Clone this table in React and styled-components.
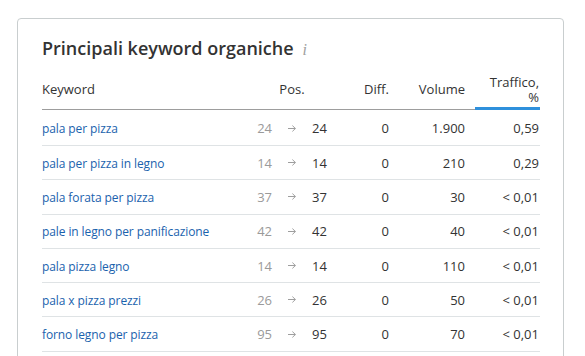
import React from 'react';
import styled, { createGlobalStyle } from 'styled-components';

const GlobalStyle = createGlobalStyle`
  html, body {
    margin: 0;
    padding: 0;
    overflow: hidden;
    background: #ffffff;
  }
  body {
    font-family: "Open Sans", "Noto Sans", sans-serif;
    color: #333;
  }
`;

const rows = [
  { keyword: 'pala per pizza', prev: 24, pos: 24, diff: 0, volume: '1.900', traffic: '0,59' },
  { keyword: 'pala per pizza in legno', prev: 14, pos: 14, diff: 0, volume: '210', traffic: '0,29' },
  { keyword: 'pala forata per pizza', prev: 37, pos: 37, diff: 0, volume: '30', traffic: '< 0,01' },
  { keyword: 'pale in legno per panificazione', prev: 42, pos: 42, diff: 0, volume: '40', traffic: '< 0,01' },
  { keyword: 'pala pizza legno', prev: 14, pos: 14, diff: 0, volume: '110', traffic: '< 0,01' },
  { keyword: 'pala x pizza prezzi', prev: 26, pos: 26, diff: 0, volume: '50', traffic: '< 0,01' },
  { keyword: 'forno legno per pizza', prev: 95, pos: 95, diff: 0, volume: '70', traffic: '< 0,01' },
];

const COLUMNS = '1fr 106px 55px 75px 65px';

const Page = styled.div`
  padding: 18px 0 0 17px;
`;

const Card = styled.section`
  box-sizing: border-box;
  width: 547px;
  border: 1px solid #c9cecf;
  border-radius: 4px;
  padding: 17px 23px 30px 24px;
`;

const Title = styled.h2`
  margin: 0 0 8px;
  font-size: 18px;
  line-height: 24px;
  font-weight: 600;
  letter-spacing: 0;
  color: #333;
  display: flex;
  align-items: baseline;
`;

const Info = styled.span`
  margin-left: 9px;
  font-family: "Liberation Serif", serif;
  font-style: italic;
  font-weight: 400;
  font-size: 16px;
  color: #a0a0a0;
`;

const HeaderRow = styled.div`
  display: grid;
  grid-template-columns: ${COLUMNS};
  height: 40px;
`;

const HeadCell = styled.div`
  box-sizing: border-box;
  display: flex;
  align-items: center;
  justify-content: ${p => (p.$align === 'center' ? 'center' : p.$align === 'right' ? 'flex-end' : 'flex-start')};
  text-align: ${p => p.$align || 'left'};
  font-size: 13px;
  line-height: 15px;
  color: #333;
  padding-right: ${p => p.$pr || 0}px;
  padding-left: ${p => p.$pl || 0}px;
  padding-top: ${p => (p.$active ? 2 : 0)}px;
  border-bottom: ${p => (p.$active ? '3px solid #2f90dc' : '1px solid #9d9d9d')};
`;

const Row = styled.div`
  display: grid;
  grid-template-columns: ${COLUMNS};
  align-items: center;
  box-sizing: border-box;
  height: ${p => (p.$first ? 36 : 34.3)}px;
  padding-top: ${p => (p.$first ? 1.5 : 0)}px;
  border-bottom: 1px solid #dfe3e5;
  font-size: 13px;
`;

const Cell = styled.div`
  text-align: ${p => p.$align || 'left'};
  padding-right: ${p => p.$pr || 0}px;
  color: #333;
  white-space: nowrap;
`;

const KeywordLink = styled.a`
  color: #1a62ad;
  font-size: 12px;
  letter-spacing: -0.1px;
  text-decoration: none;
`;

const PosCell = styled.div`
  display: flex;
  align-items: center;
  justify-content: center;
`;

const PrevPos = styled.span`
  width: 33px;
  text-align: right;
  color: #9a9a9a;
`;

const CurPos = styled.span`
  width: 33px;
  text-align: left;
  color: #333;
`;

const Arrow = styled.svg`
  width: 8px;
  height: 7px;
  margin: 0 16px;
  flex: none;
`;

function ArrowIcon() {
  return (
    <Arrow viewBox="0 0 8 7">
      <path d="M0 3.5H7.4M4.4 0.6L7.4 3.5L4.4 6.4" fill="none" stroke="#9e9e9e" strokeWidth="1" />
    </Arrow>
  );
}

export default function App() {
  return (
    <>
      <GlobalStyle />
      <Page>
        <Card>
          <Title>
            Principali keyword organiche <Info>i</Info>
          </Title>
          <HeaderRow>
            <HeadCell>Keyword</HeadCell>
            <HeadCell $align="center">Pos.</HeadCell>
            <HeadCell $align="right" $pr={11}>Diff.</HeadCell>
            <HeadCell $align="right" $pr={10}>Volume</HeadCell>
            <HeadCell $align="right" $pr={1} $pl={14} $active>Traffico, %</HeadCell>
          </HeaderRow>
          {rows.map((r, i) => (
            <Row key={r.keyword} $first={i === 0}>
              <Cell>
                <KeywordLink href="#">{r.keyword}</KeywordLink>
              </Cell>
              <PosCell>
                <PrevPos>{r.prev}</PrevPos>
                <ArrowIcon />
                <CurPos>{r.pos}</CurPos>
              </PosCell>
              <Cell $align="right" $pr={11}>{r.diff}</Cell>
              <Cell $align="right" $pr={10}>{r.volume}</Cell>
              <Cell $align="right" $pr={1}>{r.traffic}</Cell>
            </Row>
          ))}
        </Card>
      </Page>
    </>
  );
}
